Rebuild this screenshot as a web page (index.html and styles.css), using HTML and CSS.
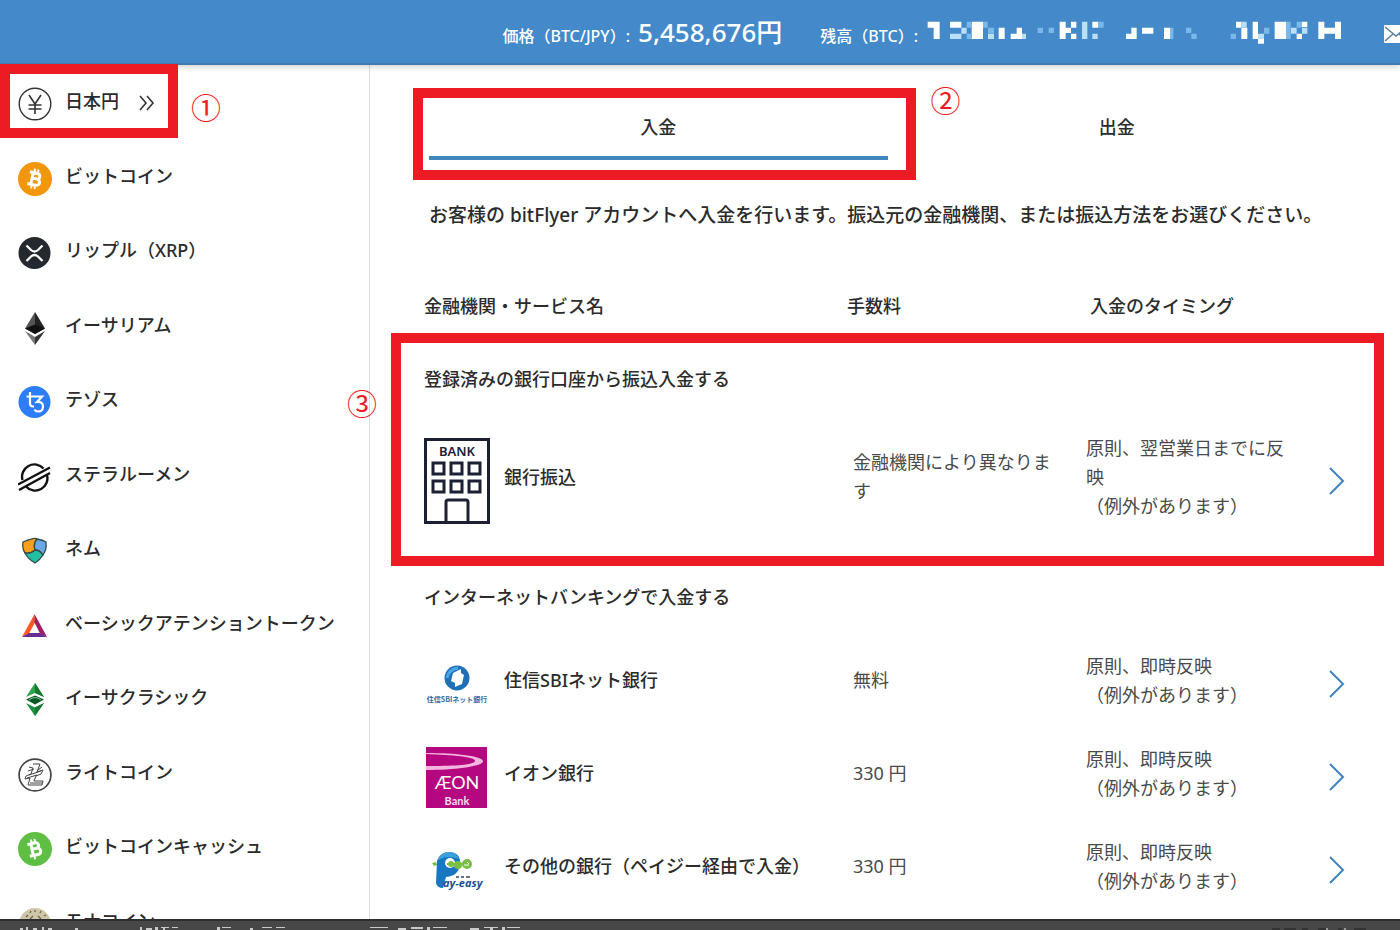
FILE: index.html
```html
<!DOCTYPE html>
<html lang="ja">
<head>
<meta charset="utf-8">
<title>入出金</title>
<link rel="stylesheet" href="styles.css">
</head>
<body>
<div class="app">
  <header class="topbar">
    <div class="stat">
      <span class="stat-label">価格（BTC/JPY）:</span>
      <span class="stat-value">5,458,676円</span>
    </div>
    <div class="stat">
      <span class="stat-label">残高（BTC）:</span>
      <svg class="mosaic" viewBox="0 0 1260 75" aria-hidden="true">
        <g fill="#fff">
          <path d="M5 2h36v52h-18v-34h-18zM72 2h34v18h-34zM137 2h34v52h-34zM218 20h18v34h-18zM254 38h18v16h-18zM272 20h16v34h-16zM401 2h18v52h-18zM419 20h16v16h-16zM435 2h16v18h-16zM435 38h16v16h-16zM499 2h18v18h-18zM600 38h16v16h-16zM616 20h16v34h-16zM648 20h34v18h-34zM714 20h18v34h-18zM930 2h16v18h-16zM946 20h18v34h-18zM980 2h16v52h-16zM996 54h18v14h-18zM1046 2h34v52h-34zM1128 2h16v16h-16zM1112 38h16v16h-16zM1177 2h18v52h-18zM1195 20h32v18h-32zM1227 2h18v52h-18z"/>
        </g>
        <g fill="#b9e0f8">
          <path d="M72 38h34v16h-34zM106 20h16v18h-16zM186 38h18v16h-18zM288 38h12v16h-12zM468 2h16v52h-16zM499 38h16v16h-16zM946 2h16v18h-16zM996 38h18v16h-18zM1095 20h17v18h-17zM1128 20h16v18h-16z"/>
        </g>
        <g fill="#79b8e8">
          <path d="M122 2h15v18h-15zM122 38h15v16h-15zM171 2h14v18h-14zM186 20h18v18h-18zM335 20h16v16h-16zM368 20h16v16h-16zM517 2h16v18h-16zM732 20h10v34h-10zM780 20h16v16h-16zM796 38h16v16h-16zM914 38h16v16h-16zM1014 20h16v18h-16zM1080 2h14v52h-14zM1112 2h16v18h-16z"/>
        </g>
      </svg>
    </div>
    <svg class="mail" viewBox="0 0 24 18" role="img" aria-label="メッセージ"><rect width="24" height="18" rx="1" fill="#fff"/><path d="M1 2l11 9 11-9M1 16l8-7M23 16l-8-7" fill="none" stroke="#5c7f9f" stroke-width="1.5"/></svg>
  </header>

  <div class="body">
    <nav class="sidebar" aria-label="通貨">
      <ul class="coins">
        <li><a class="coin" href="#"><svg viewBox="0 0 34 34"><circle cx="17" cy="17" r="15.8" fill="#fff" stroke="#333" stroke-width="1.4"/><path d="M11 8l6 9 6-9M17 17v10M10.500 18h13M10.500 22h13" fill="none" stroke="#333" stroke-width="1.6"/></svg><span>日本円</span><svg class="more" viewBox="0 0 16 16"><path d="M1 1l6 7-6 7M8 1l6 7-6 7" fill="none" stroke="#333" stroke-width="1.6"/></svg></a>
          <span class="frame frame-coin"></span><span class="step step-coin">①</span></li>
        <li><a class="coin" href="#"><svg viewBox="0 0 34 34"><circle cx="17" cy="17" r="17" fill="#f2960c"/><g transform="rotate(12 17 17)" fill="none" stroke="#fff" stroke-width="3"><path d="M13 11h5.500a2.800 2.800 0 010 5.600H14h5a3.200 3.200 0 010 6.400h-6.500M14 11v12M10.500 11h4M10.500 23h4"/><path stroke-width="2" d="M15 7v4M18.500 7v4M15 23v4M18.500 23v4"/></g></svg><span>ビットコイン</span></a></li>
        <li><a class="coin" href="#"><svg viewBox="0 0 34 34"><circle cx="16.500" cy="17" r="16" fill="#23292f"/><path d="M8.500 9.500l4.500 4.500q3.500 3 7 0l4.500-4.500M8.500 25l4.500-4.500q3.500-3 7 0l4.500 4.500" fill="none" stroke="#fff" stroke-width="2.300"/></svg><span>リップル（XRP）</span></a></li>
        <li><a class="coin" href="#"><svg viewBox="0 0 34 34"><path d="M17 1l-10 16.500 10 5.500z" fill="#555"/><path d="M17 1l10 16.500-10 5.500z" fill="#222"/><path d="M7 17.500l10-4 10 4-10 5.500z" fill="#111"/><path d="M7 20l10 6v8z" fill="#777"/><path d="M27 20l-10 6v8z" fill="#333"/></svg><span>イーサリアム</span></a></li>
        <li><a class="coin" href="#"><svg viewBox="0 0 34 34"><circle cx="16.500" cy="17" r="16" fill="#2c7df7"/><path d="M8.500 11.500h8M12 7v11.500q0 3 3 3h1M16.500 11.500h7.500l-5 5.500q6-.5 6 4.500 0 5-5 5-2.500 0-3.500-2" fill="none" stroke="#fff" stroke-width="2.200"/></svg><span>テゾス</span></a></li>
        <li><a class="coin" href="#"><svg viewBox="0 0 34 34" fill="none" stroke="#111" stroke-width="2.400"><path d="M25.500 8.500A12.300 12.300 0 004.500 20M29 15a12.300 12.300 0 01-21 11.500M0 24.500L32 7.500M1 30L32 13"/></svg><span>ステラルーメン</span></a></li>
        <li><a class="coin" href="#"><svg viewBox="0 0 34 34" stroke="#344b4b" stroke-width="1.300"><path d="M5 8q12-5 14-3-4 5-2 11-5 4-10 3Q4 14 5 8z" fill="#f7a01c"/><path d="M19 5q6 1 9 3 1 7-3 13-4-5-8-5-2-6 2-11z" fill="#6aa9e6"/><path d="M7 19q6 1 10-3 5 0 8 5-3 5-8 8-7-4-10-10z" fill="#22bfa5"/></svg><span>ネム</span></a></li>
        <li><a class="coin" href="#"><svg viewBox="0 0 34 34"><path d="M16.500 5L4 28l7-3.500 6-11z" fill="#ff5a1f"/><path d="M16.500 5L29 28l-7-3.500-5.500-11z" fill="#9e1f63"/><path d="M4 28h25l-7-4H11z" fill="#662d91"/></svg><span>ベーシックアテンショントークン</span></a></li>
        <li><a class="coin" href="#"><svg viewBox="0 0 34 34"><path d="M17 0l9 14-9-4-9 4z" fill="#2da44b"/><path d="M17 0v10l9 4z" fill="#147a32"/><path d="M8 16.500l9-4 9 4-9 5z" fill="#0c5727"/><path d="M11 17q6-5 12 0" fill="none" stroke="#7ec98c"/><path d="M8 20l9 4.500 9-4.500-9 13z" fill="#1f9140"/><path d="M17 24.500l9-4.500-9 13z" fill="#147a32"/></svg><span>イーサクラシック</span></a></li>
        <li><a class="coin" href="#"><svg viewBox="0 0 34 34" fill="none" stroke="#444"><circle cx="17" cy="17" r="15.900" stroke-width="1.700"/><path d="M15 6h7l-3 8 6-2-2 4-5 2-2 5h9l-1 4H10l2-7-5 1 1-3 5-2 2-6-4-1M10 13l6-2M20 12l4-3M12 25h12M11 17l12-4M9 20l10-3"/></svg><span>ライトコイン</span></a></li>
        <li><a class="coin" href="#"><svg viewBox="0 0 34 34"><circle cx="17" cy="17" r="17" fill="#5fbf45"/><g transform="rotate(-12 17 17)" fill="none" stroke="#fff" stroke-width="3"><path d="M13 11h5.500a2.800 2.800 0 010 5.600H14h5a3.200 3.200 0 010 6.400h-6.500M14 11v12M10.500 11h4M10.500 23h4"/><path stroke-width="2" d="M15 7v4M18.500 7v4M15 23v4"/></g></svg><span>ビットコインキャッシュ</span></a></li>
        <li><a class="coin" href="#"><svg viewBox="0 0 34 34"><circle cx="17" cy="17" r="16" fill="#cfc5a8"/><path d="M8 10l2-2M12 6l1-2M17 5V3M22 6l1-2M26 9l2-1M12 12l3-3M20 9l3 3" stroke="#6b644f" stroke-width="1.300"/></svg><span>モナコイン</span></a></li>
      </ul>
    </nav>

    <main class="main">
      <div class="tabs" role="tablist">
        <div class="tab-slot">
          <button class="tab tab-active" role="tab" aria-selected="true">入金</button>
          <span class="frame frame-tab"></span><span class="step step-tab">②</span>
        </div>
        <div class="tab-slot"><button class="tab" role="tab" aria-selected="false">出金</button></div>
      </div>
      <p class="lead">お客様の bitFlyer アカウントへ入金を行います。振込元の金融機関、または振込方法をお選びください。</p>

      <table class="methods">
        <colgroup><col><col class="col-fee"><col class="col-time"><col class="col-go"></colgroup>
        <thead>
          <tr><th>金融機関・サービス名</th><th>手数料</th><th class="head-time">入金のタイミング</th><th></th></tr>
        </thead>
        <tbody class="group">
          <tr class="group-row"><th colspan="4">登録済みの銀行口座から振込入金する<span class="frame frame-bank"></span><span class="step step-bank">③</span></th></tr>
          <tr class="method">
            <td><div class="name">
              <svg class="logo" viewBox="0 0 66 86"><rect x="1.500" y="1.500" width="63" height="83" fill="#fff" stroke="#1c2033" stroke-width="3"/><text class="bank-sign" x="33" y="18" text-anchor="middle">BANK</text><path d="M9 25h11v11H9zM27 25h11v11H27zM45 25h11v11H45zM9 43h11v11H9zM27 43h11v11H27zM45 43h11v11H45z" fill="none" stroke="#1c2033" stroke-width="3"/><path d="M22 84V64q0-2 2-2h18q2 0 2 2v20" fill="none" stroke="#1c2033" stroke-width="3"/></svg>
              <span>銀行振込</span></div></td>
            <td class="fee">金融機関により異なります</td>
            <td class="time">原則、翌営業日までに反映<br>（例外があります）</td>
            <td class="go"><a href="#" aria-label="銀行振込"><svg viewBox="0 0 18 28"><path d="M2 1l13 13L2 27" fill="none" stroke="#3f83c0" stroke-width="2"/></svg></a></td>
          </tr>
        </tbody>
        <tbody>
          <tr class="group-row group-next"><th colspan="4">インターネットバンキングで入金する</th></tr>
          <tr class="method">
            <td><div class="name">
              <svg class="logo" viewBox="0 0 66 40"><circle cx="33" cy="13" r="12.500" fill="#1f6fb8"/><path d="M23 13Q25 4 34 3" fill="none" stroke="#47a8e5" stroke-width="3"/><path d="M29 8l8-4v4l3 2-2 9-7 3v-4l-4-2z" fill="#fff"/><text class="sbi-name" x="33" y="37" text-anchor="middle">住信SBIネット銀行</text></svg>
              <span>住信SBIネット銀行</span></div></td>
            <td class="fee">無料</td>
            <td class="time">原則、即時反映<br>（例外があります）</td>
            <td class="go"><a href="#" aria-label="住信SBIネット銀行"><svg viewBox="0 0 18 28"><path d="M2 1l13 13L2 27" fill="none" stroke="#3f83c0" stroke-width="2"/></svg></a></td>
          </tr>
          <tr class="method">
            <td><div class="name">
              <svg class="logo" viewBox="0 0 66 62"><rect x="2" y="0" width="61" height="61" fill="#b5077f"/><path d="M2 6c31 0 56 3 57 8s-27 9-57 9v-4c29 0 48-1 49-5S30 8 2 7z" fill="#f5b5de"/><text class="aeon-name" x="33" y="42" text-anchor="middle">ÆON</text><text class="aeon-bank" x="33" y="58" text-anchor="middle">Bank</text></svg>
              <span>イオン銀行</span></div></td>
            <td class="fee">330 円</td>
            <td class="time">原則、即時反映<br>（例外があります）</td>
            <td class="go"><a href="#" aria-label="イオン銀行"><svg viewBox="0 0 18 28"><path d="M2 1l13 13L2 27" fill="none" stroke="#3f83c0" stroke-width="2"/></svg></a></td>
          </tr>
          <tr class="method">
            <td><div class="name">
              <svg class="logo" viewBox="0 0 66 40"><path d="M8 12l4-1 1 3-3 1z" fill="#77c043"/><path d="M13 10Q16 1 26 1q11 1 10 12-1 12-14 13l-3 11q-6 0-7-5z" fill="#1976c2"/><path d="M13 10Q16 1 26 1q7 1 9 7-13-5-22 2z" fill="#39a0dc"/><circle cx="26" cy="12" r="5" fill="#fff"/><path d="M23 13h20" stroke="#77c043" stroke-width="2"/><circle cx="27" cy="13" r="3" fill="#77c043"/><circle cx="34" cy="14" r="4" fill="#77c043"/><circle cx="43" cy="13" r="5" fill="#77c043"/><path d="M40 14h5M43 11l2 2" stroke="#fff"/><path d="M32 26h3M37 26h3M42 26h4" stroke="#345" stroke-width="1.500"/><text class="pay-name" x="19" y="36">ay-easy</text></svg>
              <span>その他の銀行（ペイジー経由で入金）</span></div></td>
            <td class="fee">330 円</td>
            <td class="time">原則、即時反映<br>（例外があります）</td>
            <td class="go"><a href="#" aria-label="その他の銀行"><svg viewBox="0 0 18 28"><path d="M2 1l13 13L2 27" fill="none" stroke="#3f83c0" stroke-width="2"/></svg></a></td>
          </tr>
        </tbody>
      </table>
    </main>
  </div>

  <footer class="bottombar">
    <svg class="bottom-left" viewBox="0 0 520 3" aria-hidden="true"><path d="M20 1h3v2h-3zM26 0h2v3h-2zM33 1h4v2h-4zM42 0h2v3h-2zM48 1h4v2h-4zM75 1h3v2h-3zM140 0h2v3h-2zM146 1h6v2h-6zM155 0h3v3h-3zM161 0h8v1h-8zM163 1h2v2h-2zM172 0h6v1h-6zM217 0h3v3h-3zM222 0h9v1h-9zM250 1h3v2h-3zM262 0h10v1h-10zM276 0h9v1h-9zM370 0h18v1h-18zM398 1h8v2h-8zM411 0h12v2h-12zM427 0h3v3h-3zM433 0h14v1h-14zM470 1h9v2h-9zM484 0h14v1h-14zM490 1h3v2h-3zM502 0h3v3h-3zM507 0h13v1h-13z" fill="#c9c9c9"/></svg>
    <svg class="bottom-right" viewBox="0 0 100 3" aria-hidden="true"><path d="M2 1h8v2h-8zM14 1h12v2h-12zM32 1h6v2h-6zM48 1h8v2h-8zM68 1h4v2h-4zM84 1h12v2h-12z" fill="#333"/><path d="M56 1h2v2h-2zM74 1h2v2h-2z" fill="#999"/></svg>
  </footer>
</div>
</body>
</html>
```
FILE: styles.css
```css
* { box-sizing: border-box; }

body {
  margin: 0;
  background: #fff;
  color: #2b2b2b;
  font-family: "Noto Sans", "Noto Sans CJK JP", sans-serif;
  font-size: 18px;
}

.app {
  display: flex;
  flex-direction: column;
  height: 100vh;
  overflow: hidden;
}

/* top bar */
.topbar {
  position: relative;
  z-index: 1;
  display: flex;
  flex: none;
  align-items: center;
  justify-content: flex-end;
  gap: 38px;
  height: 65px;
  padding-top: 4px;
  background: #448acb;
  border-bottom: 2px solid #4379b2;
  box-shadow: 0 2px 6px rgba(0, 0, 0, 0.18);
  color: #fff;
  white-space: nowrap;
}
.stat { display: flex; align-items: center; gap: 8px; }
.stat-label { padding-top: 2px; font-size: 16px; font-weight: 500; }
.stat-value { padding-bottom: 4px; font-size: 26px; font-weight: 500; line-height: 32px; }
.mosaic { width: 420px; height: 25px; }
.mail { width: 24px; height: 18px; margin-right: -8px; }

.body { display: flex; flex: 1; min-height: 0; }

/* currency list */
.sidebar { flex: none; width: 370px; border-right: 1px solid #dcdcdc; }
.coins {
  display: grid;
  grid-auto-rows: 1fr;
  min-height: 894px;
  margin: 0;
  padding: 0;
  list-style: none;
}
.coins li { position: relative; display: grid; }
.coin {
  display: flex;
  align-items: center;
  gap: 13px;
  padding: 0 0 4px 18px;
  color: #2b2b2b;
  font-weight: 500;
  text-decoration: none;
}
.coin svg { width: 34px; height: 34px; margin-top: 8px; }
.coin .more { width: 16px; height: 16px; margin: 6px 0 0 7px; }

/* highlight frames and step numbers */
.frame {
  position: absolute;
  border: 10px solid #ed1c24;
  pointer-events: none;
}
.frame-coin { left: 0; top: -1px; width: 178px; height: 74px; z-index: 2; }
.frame-tab { left: -16px; right: -28px; top: -8px; bottom: -20px; }
.frame-bank { left: -33px; right: -38px; top: 7px; height: 233px; }
.step {
  position: absolute;
  width: 30px;
  color: #ed1c24;
  font-family: "Noto Sans CJK JP", sans-serif;
  font-size: 30px;
  font-weight: 400;
  line-height: 30px;
  text-align: center;
}
.step-coin { left: 191px; top: 26px; }
.step-tab { right: -73px; top: -12px; }
.step-bank { left: -77px; top: 61px; }

/* deposit panel */
.main { flex: 1; min-width: 0; padding: 31px 54px 0; }
.tabs { display: grid; grid-template-columns: 1fr 1fr; margin-left: 5px; }
.tab-slot { position: relative; display: grid; }
.tab {
  height: 64px;
  padding: 0;
  border: 0;
  border-bottom: 4px solid transparent;
  background: none;
  color: #2b2b2b;
  font: inherit;
  font-weight: 500;
}
.tab-active { border-bottom-color: #4187bd; }
.lead {
  margin: 41px 0 57px 5px;
  font-size: 19px;
  font-weight: 500;
  line-height: 28px;
  white-space: nowrap;
}

.methods { width: 100%; table-layout: fixed; border-collapse: collapse; }
.col-fee { width: 239px; }
.col-time { width: 220px; }
.col-go { width: 40px; }
.methods th {
  height: 40px;
  padding: 0;
  font-weight: 500;
  line-height: 28px;
  text-align: left;
}
.methods .head-time { padding-left: 4px; }
.group { position: relative; }
.methods .group-row th { height: 106px; }
.methods .group-next th { height: 112px; padding-top: 38px; }
.methods td { height: 93px; padding: 0; line-height: 29px; }
.methods .group td { height: 90px; }
.methods .fee { padding: 0 26px 0 6px; color: #4a4a4a; }
.methods .time { padding-right: 12px; color: #4a4a4a; }
.name { display: flex; align-items: center; gap: 14px; font-weight: 500; white-space: nowrap; }
.logo { flex: none; width: 66px; margin: 6px 0 -2px; }
.go a { display: flex; justify-content: flex-end; padding-top: 7px; }
.go svg { width: 18px; height: 28px; }

.bank-sign { font: 600 13px "Noto Sans", sans-serif; fill: #1c2033; }
.sbi-name { font: 700 7px "Noto Sans CJK JP", sans-serif; fill: #2f6da8; }
.aeon-name { font: 400 18px "Lato", sans-serif; fill: #fff; }
.aeon-bank { font: 700 11px "Lato", sans-serif; fill: #fbdcf0; }
.pay-name { font: italic 700 11px "Open Sans", sans-serif; fill: #1d4f93; }

/* bottom bar */
.bottombar {
  position: relative;
  display: flex;
  flex: none;
  align-items: flex-end;
  justify-content: space-between;
  height: 11px;
  padding-right: 30px;
  background: #474747;
  border-top: 2px solid #2b2f2f;
}
.bottom-left { width: 520px; height: 3px; }
.bottom-right { width: 100px; height: 3px; }
```
